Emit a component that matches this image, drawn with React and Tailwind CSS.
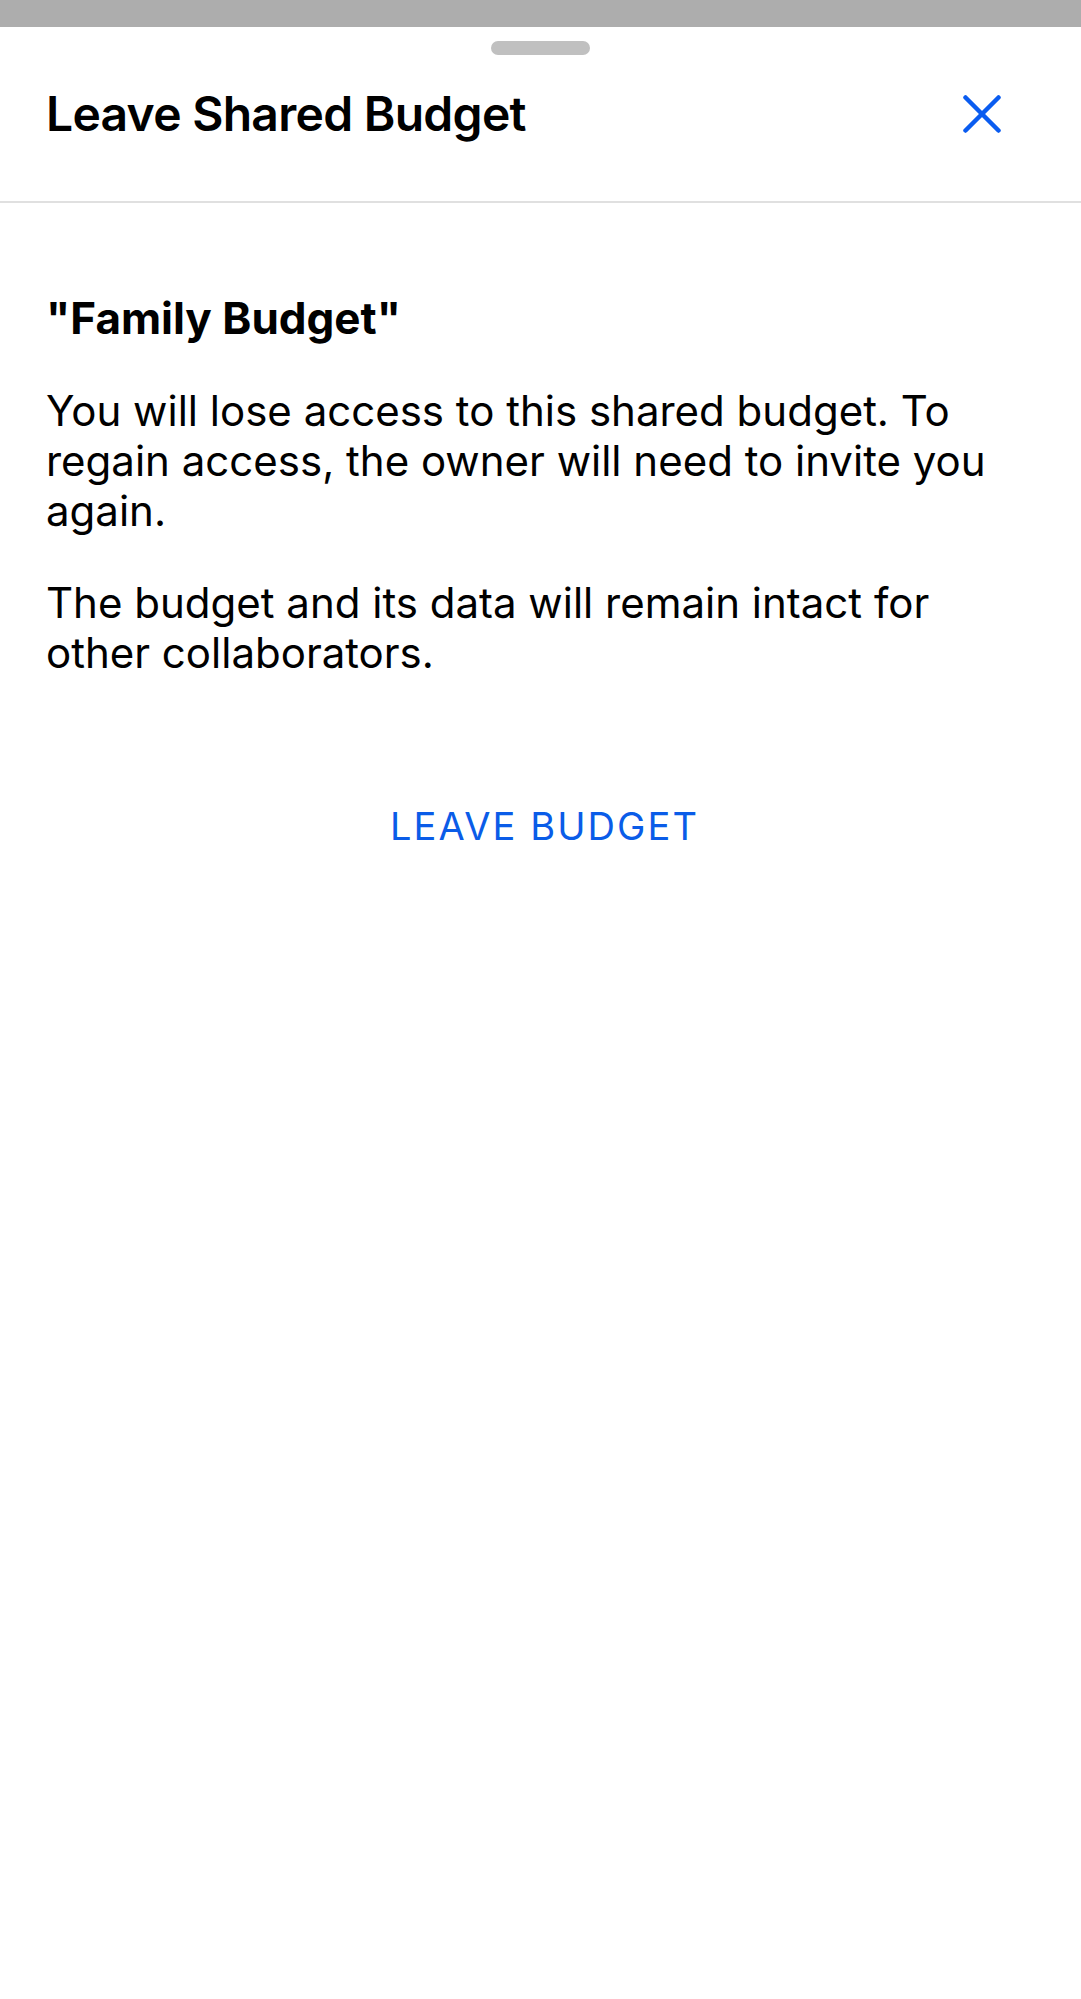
// Bottom sheet asking the user to confirm leaving a shared budget
function CloseIcon() {
  return (
    <svg width="38" height="38" viewBox="0 0 38 38" fill="none" stroke="currentColor" strokeWidth="4.5" strokeLinecap="round">
      <line x1="2.5" y1="2.5" x2="35.5" y2="35.5" />
      <line x1="35.5" y1="2.5" x2="2.5" y2="35.5" />
    </svg>
  )
}

function LeaveBudgetSheet({ budgetName, onClose, onLeave }) {
  return (
    <div className="flex-1 bg-white flex flex-col">
      <div className="mx-auto mt-[14px] w-[99px] h-[14px] rounded-full bg-[#c0c0c0]" />

      <div className="flex items-center justify-between pl-[46px] pr-[80px] pt-[30px] pb-[58px] border-b-2 border-[#e0e0e0]">
        <h1 className="text-[48px] leading-[58px] font-semibold tracking-[-0.015em] text-black">Leave Shared Budget</h1>
        <button onClick={onClose} className="text-[#0a5cf0]">
          <CloseIcon />
        </button>
      </div>

      <div className="px-[46px] pt-[89px] flex flex-col">
        <h2 className="text-[44px] leading-[52px] font-bold text-black">"{budgetName}"</h2>
        <p className="mt-[42px] text-[42px] leading-[50px] text-black">
          You will lose access to this shared budget. To regain access, the owner will need to invite you again.
        </p>
        <p className="mt-[42px] text-[42px] leading-[50px] text-black">
          The budget and its data will remain intact for other collaborators.
        </p>
        <button
          onClick={onLeave}
          className="mt-[125px] self-center pl-[8px] text-[38px] leading-[46px] tracking-[0.055em] text-[#0a5ce8] uppercase"
        >
          Leave Budget
        </button>
      </div>
    </div>
  )
}

export default function App() {
  return (
    <div className="min-h-[1999px] flex flex-col bg-white" style={{ fontFamily: 'Inter, "Noto Sans", sans-serif' }}>
      <div className="h-[27px] bg-[#adadad]" />
      <LeaveBudgetSheet
        budgetName="Family Budget"
        onClose={() => {}}
        onLeave={() => {}}
      />
    </div>
  )
}
